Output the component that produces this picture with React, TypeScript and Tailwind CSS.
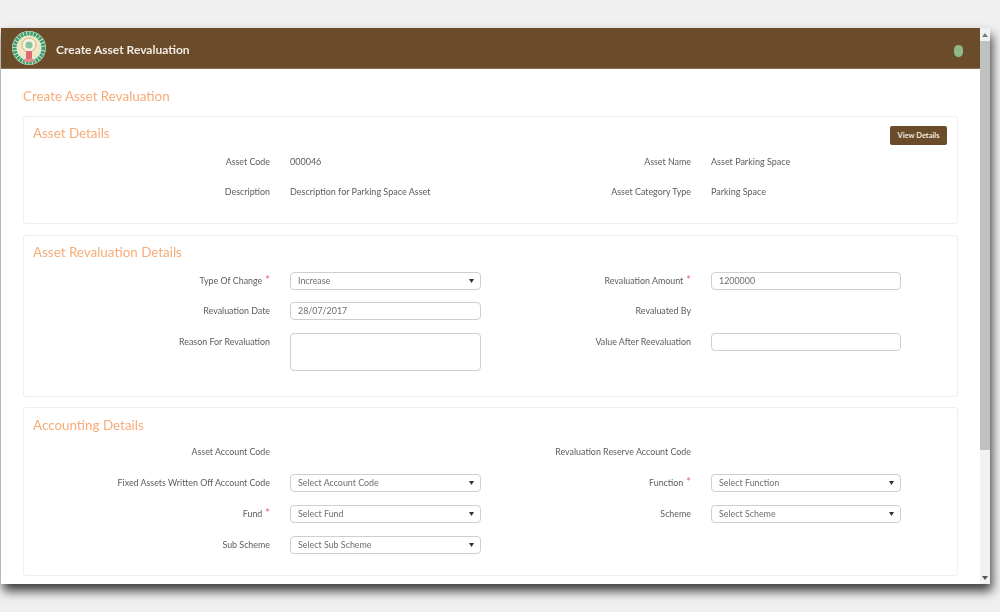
const font = { fontFamily: 'Lato, "Open Sans", sans-serif' };

function Label({ text, req }: { text: string; req?: boolean }) {
  return (
    <div className="text-right text-[8.9px] leading-[18px] text-[#5c5c5c] pr-[20px] whitespace-nowrap">
      {text}
      {req && <span className="ml-[3px] text-[#f0606a] text-[11px] leading-[10px]">*</span>}
    </div>
  );
}

function Value({ text }: { text: string }) {
  return <div className="text-[9px] leading-[18px] text-[#5c5c5c] whitespace-nowrap">{text}</div>;
}

function Box({ text, select, tall }: { text?: string; select?: boolean; tall?: boolean }) {
  return (
    <div
      className={`flex items-center justify-between border border-[#cfcfcf] rounded-[4px] bg-white pl-[7px] pr-[6px] text-[8.9px] text-[#6e6e6e] ${tall ? "h-[38px]" : "h-[18px]"}`}
    >
      <span>{text}</span>
      {select && (
        <svg width="5" height="4" viewBox="0 0 5 4">
          <path d="M0 0H5L2.5 4Z" fill="#333" />
        </svg>
      )}
    </div>
  );
}

function Row({ children, className = "" }: { children: React.ReactNode; className?: string }) {
  return <div className={`grid h-[19px] grid-cols-[266px_191px_230px_190px] ${className}`}>{children}</div>;
}

function Card({ title, titleClass, height, children }: { title: string; titleClass: string; height: string; children: React.ReactNode }) {
  return (
    <section className={`relative border border-[#f3eded] rounded-[3px] ${height}`}>
      <h2 className={`pl-[9px] text-[13.4px] leading-[18px] text-[#f7ab78] ${titleClass}`}>{title}</h2>
      {children}
    </section>
  );
}

function Emblem() {
  return (
    <svg width="36" height="36" viewBox="0 0 36 36">
      <circle cx="18" cy="18" r="17" fill="#dcebd8" />
      <circle cx="18" cy="18" r="14.5" fill="none" stroke="#3f9f6c" strokeWidth="4" strokeDasharray="2.5 0.8" />
      <circle cx="18" cy="17" r="11" fill="#f1e6c0" />
      <circle cx="18" cy="15" r="7" fill="#f5f2e2" stroke="#c9b676" strokeWidth="1" />
      <circle cx="18" cy="15" r="3.6" fill="#8cc3a3" />
      <rect x="15" y="21" width="6" height="8" rx="1" fill="#df6a70" />
      <rect x="13" y="29" width="10" height="3" fill="#e58c8c" />
    </svg>
  );
}

export default function App() {
  return (
    <div className="h-[612px] w-[1000px] overflow-hidden bg-[#f0f0f0] pt-[28px] pl-[1px]" style={font}>
      <div className="flex h-[556px] w-[989px] bg-white shadow-[2px_7px_10px_rgba(0,0,0,0.75)] blur-[0.7px]">
        <main className="w-[979px] overflow-hidden">
          <header className="flex h-[41px] items-center bg-[#6a4c2b] pl-[10px] pr-[17px] border-b border-[#8a7256]">
            <Emblem />
            <h1 className="ml-[9px] mt-[3px] text-[12px] font-bold text-[#f1ebe2]">Create Asset Revaluation</h1>
            <span className="ml-auto mt-[6px] h-[12px] w-[9px] rounded-full bg-[#8fb98a]" />
          </header>
          <div className="pl-[22px] pr-[22px]">
            <div className="pt-[18px] pb-[11px] text-[13.4px] leading-[18px] text-[#f7ab78]">Create Asset Revaluation</div>

            <Card title="Asset Details" titleClass="pt-[7px]" height="h-[108px]">
              <button className="absolute right-[10px] top-[9px] h-[19px] w-[57px] rounded-[2px] bg-[#6a4c2b] text-[7.5px] font-bold text-[#efe8dd]">
                View Details
              </button>
              <Row className="mt-[11px]">
                <Label text="Asset Code" />
                <Value text="000046" />
                <Label text="Asset Name" />
                <Value text="Asset Parking Space" />
              </Row>
              <Row className="mt-[11px]">
                <Label text="Description" />
                <Value text="Description for Parking Space Asset" />
                <Label text="Asset Category Type" />
                <Value text="Parking Space" />
              </Row>
            </Card>

            <div className="mt-[11px]">
              <Card title="Asset Revaluation Details" titleClass="pt-[7px]" height="h-[162px]">
                <Row className="mt-[11px]">
                  <Label text="Type Of Change" req />
                  <Box text="Increase" select />
                  <Label text="Revaluation Amount" req />
                  <Box text="1200000" />
                </Row>
                <Row className="mt-[11px]">
                  <Label text="Revaluation Date" />
                  <Box text="28/07/2017" />
                  <Label text="Revaluated By" />
                  <div />
                </Row>
                <Row className="mt-[12px]">
                  <Label text="Reason For Revaluation" />
                  <Box tall />
                  <Label text="Value After Reevaluation" />
                  <Box />
                </Row>
              </Card>
            </div>

            <div className="mt-[10px]">
              <Card title="Accounting Details" titleClass="pt-[8px]" height="h-[169px]">
                <Row className="mt-[9px]">
                  <Label text="Asset Account Code" />
                  <div />
                  <Label text="Revaluation Reserve Account Code" />
                  <div />
                </Row>
                <Row className="mt-[12px]">
                  <Label text="Fixed Assets Written Off Account Code" />
                  <Box text="Select Account Code" select />
                  <Label text="Function" req />
                  <Box text="Select Function" select />
                </Row>
                <Row className="mt-[12px]">
                  <Label text="Fund" req />
                  <Box text="Select Fund" select />
                  <Label text="Scheme" />
                  <Box text="Select Scheme" select />
                </Row>
                <Row className="mt-[12px]">
                  <Label text="Sub Scheme" />
                  <Box text="Select Sub Scheme" select />
                </Row>
              </Card>
            </div>
          </div>
        </main>
        <aside className="flex w-[10px] flex-col bg-[#f1f1f1]">
          <div className="flex h-[13px] items-center justify-center">
            <svg width="6" height="4" viewBox="0 0 6 4"><path d="M0 4H6L3 0Z" fill="#777" /></svg>
          </div>
          <div className="h-[409px] bg-[#c1c1c1]" />
          <div className="flex-1" />
          <div className="flex h-[13px] items-center justify-center">
            <svg width="6" height="4" viewBox="0 0 6 4"><path d="M0 0H6L3 4Z" fill="#555" /></svg>
          </div>
        </aside>
      </div>
    </div>
  );
}
